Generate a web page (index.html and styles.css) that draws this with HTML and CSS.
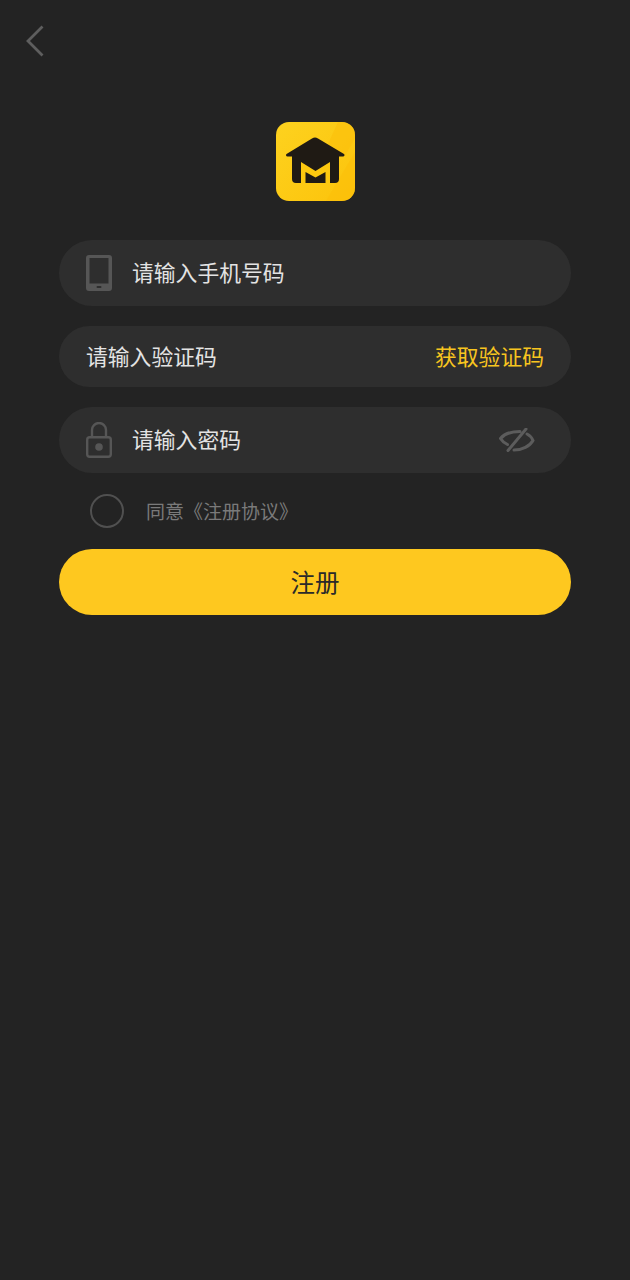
FILE: index.html
```html
<!DOCTYPE html>
<html lang="zh-CN">
<head>
  <meta charset="UTF-8">
  <meta name="viewport" content="width=device-width, initial-scale=1.0">
  <title>注册</title>
  <link rel="stylesheet" href="styles.css">
</head>
<body>
  <div class="topbar">
    <svg class="back" width="18" height="32" viewBox="0 0 18 32">
      <path d="M16.500 1.500 2 16l14.500 14.500" fill="none" stroke="#5e5e5e" stroke-width="2.800"/>
    </svg>
  </div>

  <div class="logo">
    <svg width="79" height="79" viewBox="0 0 79 79">
      <defs>
        <linearGradient id="logoBg" x1="0" y1="0" x2="1" y2="1">
          <stop offset="0" stop-color="#fdd21f"/>
          <stop offset="1" stop-color="#fcc30b"/>
        </linearGradient>
      </defs>
      <rect width="79" height="79" rx="13" fill="url(#logoBg)"/>
      <path d="M79 30v36a13 13 0 0 1-13 13H50z" fill="#fbbd08" opacity=".5"/>
      <path d="M62 0 52 22l17 12 10-18v-3A13 13 0 0 0 66 0z" fill="#fbbf0c" opacity=".6"/>
      <path d="M36 16.500a5 5 0 0 1 6 0L68 32c1 .8.500 2.500-1 2.500h-4V57a4 4 0 0 1-4 4H20a4 4 0 0 1-4-4V34.500h-4.500c-1.500 0-2-1.700-1-2.500z" fill="#1f1a14"/>
      <path d="M25 40l14.500 9L54 40v21h-4.500V50l-10 5.500L29.500 50v11H25z" fill="#fcc80f"/>
    </svg>
  </div>

  <form class="form">
    <div class="field">
      <svg class="field-icon" width="26" height="36" viewBox="0 0 26 36">
        <path fill-rule="evenodd" d="M3 0h20a3 3 0 0 1 3 3v30a3 3 0 0 1-3 3H3a3 3 0 0 1-3-3V3a3 3 0 0 1 3-3zm.5 3v25.500h19V3z" fill="#565656"/>
        <rect x="10.500" y="31" width="5" height="2" rx="1" fill="#2e2e2e"/>
      </svg>
      <span class="field-text">请输入手机号码</span>
    </div>

    <div class="field field-code">
      <span class="field-text">请输入验证码</span>
      <span class="field-text get-code">获取验证码</span>
    </div>

    <div class="field">
      <svg class="field-icon" width="26" height="36" viewBox="0 0 26 36">
        <path d="M6 16V8a7 7 0 0 1 14 0v8" fill="none" stroke="#565656" stroke-width="2.400"/>
        <rect x="1.200" y="15.200" width="23.600" height="19.600" rx="2.500" fill="none" stroke="#565656" stroke-width="2.400"/>
        <circle cx="13" cy="25" r="3.800" fill="#565656"/>
      </svg>
      <span class="field-text">请输入密码</span>
      <svg class="eye" width="36" height="24" viewBox="0 0 36 24">
        <g fill="none" stroke="#5c5c5c" stroke-width="3" stroke-linecap="round">
          <path d="M21 3.500C12 3.500 5 6 1.500 10.500c1.500 2.500 4 4.500 7 6"/>
          <path d="M15 22c8 0 16-4 19-9.500-1-2.500-3-5-6-6.500"/>
          <path d="M27 1 9 22.500"/>
        </g>
      </svg>
    </div>

    <div class="agree">
      <span class="radio"></span>
      <span class="agree-text">同意《注册协议》</span>
    </div>

    <button type="button" class="submit">注册</button>
  </form>
</body>
</html>
```

FILE: styles.css
```css
* {
  margin: 0;
  padding: 0;
  box-sizing: border-box;
}

body {
  width: 630px;
  height: 1280px;
  overflow: hidden;
  background-color: #232323;
  font-family: "Noto Sans CJK SC", "Liberation Sans", sans-serif;
}

.topbar {
  height: 122px;
  padding: 25px 0 0 26px;
}

.back {
  display: block;
}

.logo {
  display: flex;
  justify-content: center;
  height: 79px;
  margin-bottom: 39px;
}

.form {
  display: flex;
  flex-direction: column;
  width: 512px;
  margin-left: 59px;
}

.field {
  display: flex;
  align-items: center;
  height: 66px;
  margin-bottom: 20px;
  padding: 0 36px 0 27px;
  border-radius: 33px;
  background-color: #2e2e2e;
  color: #e3e3e3;
  font-size: 21.800px;
}

.field-icon {
  flex-shrink: 0;
  margin-right: 20px;
}

.field-text {
  margin-bottom: 2px;
  line-height: 30px;
}

.field-code {
  justify-content: space-between;
  height: 61px;
  padding: 0 27px;
}

.get-code {
  color: #f8c51f;
}

.eye {
  margin-left: auto;
}

.agree {
  display: flex;
  align-items: center;
  height: 34px;
  margin: 1px 0 21px 31px;
}

.radio {
  width: 34px;
  height: 34px;
  margin-right: 22px;
  border: 2px solid #505050;
  border-radius: 50%;
}

.agree-text {
  margin-bottom: 2px;
  color: #7a7a7a;
  font-size: 19px;
}

.submit {
  height: 66px;
  padding-bottom: 2px;
  border: none;
  border-radius: 33px;
  background-color: #fec81f;
  color: #2a2a2a;
  font-family: inherit;
  font-size: 24.500px;
  cursor: pointer;
}
```
